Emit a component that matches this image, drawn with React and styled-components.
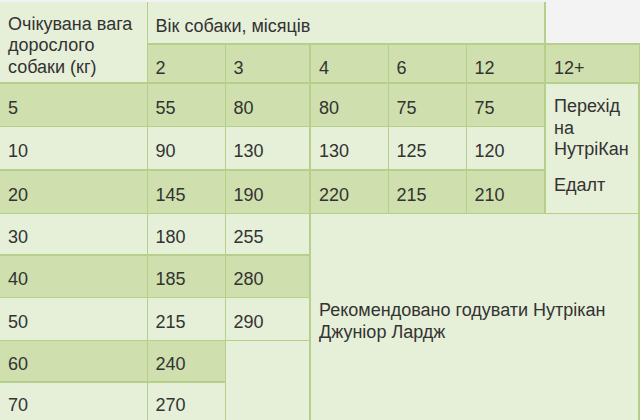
import React from 'react';
import styled, { createGlobalStyle } from 'styled-components';

const GlobalStyle = createGlobalStyle`
  body {
    margin: 0;
    background: #f3f3f3;
    font-family: "Liberation Sans", Arial, sans-serif;
  }
`;

const FeedTable = styled.table`
  border-collapse: collapse;
  table-layout: fixed;
  width: 639px;
  margin-top: 2px;
  font-size: 18px;
  line-height: 21.6px;
  color: #333;
`;

const Row = styled.tr`
  height: ${p => p.$height || 43}px;
  border-top: ${p => (p.$top === undefined ? 1 : p.$top)}px solid #b6cf8a;
`;

const Cell = styled.td`
  padding: ${p => p.$padTop ?? 8}px 8px 0;
  vertical-align: middle;
  text-align: left;
  font-weight: normal;
  border: 1px solid #b6cf8a;
  border-left-width: ${p => (p.$first ? 0 : p.$thickLeft ? 2 : 1)}px;
  border-top-width: ${p => (p.$noTop ? 0 : 1)}px;
  background: ${p => (p.$dark ? '#cfdfae' : '#e6efd8')};
`;

const EmptyCorner = styled.th`
  background: transparent;
  border: none;
  border-left: 2px solid #b6cf8a;
  border-bottom: 2px solid #b6cf8a;
`;

const NoteCell = styled(Cell)`
  padding: 0 8px 4px;
  border-right: 2px solid #b6cf8a;
`;

const NoteLine = styled.span`
  display: block;
  margin-top: ${p => (p.$gap ? 14 : 0)}px;
`;

const cols = [147, 78, 85, 78, 78, 79, 94];
const ages = ['2', '3', '4', '6', '12'];

const rows = [
  { kg: 5, vals: [55, 80, 80, 75, 75], dark: true, h: 43 },
  { kg: 10, vals: [90, 130, 130, 125, 120], h: 44 },
  { kg: 20, vals: [145, 190, 220, 215, 210], dark: true, thick: true, h: 43 },
  { kg: 30, vals: [180, 255], h: 42 },
  { kg: 40, vals: [185, 280], dark: true, thick: true, h: 42 },
  { kg: 50, vals: [215, 290], h: 43 },
  { kg: 60, vals: [240], dark: true, h: 42 },
  { kg: 70, vals: [270], thick: true, h: 43, pad: 5 },
];

export default function App() {
  return (
    <>
      <GlobalStyle />
      <FeedTable>
        <colgroup>
          {cols.map((w, i) => (
            <col key={i} style={{ width: w }} />
          ))}
        </colgroup>
        <thead>
          <Row $height={42} $top={0}>
            <Cell as="th" rowSpan={2} $first $noTop>Очікувана вага дорослого собаки (кг)</Cell>
            <Cell as="th" colSpan={5} $noTop>Вік собаки, місяців</Cell>
            <EmptyCorner />
          </Row>
          <Row $height={39} $top={2}>
            {ages.map((a, i) => (
              <Cell as="th" key={a} $dark $padTop={11} $thickLeft={i === 2}>{a}</Cell>
            ))}
            <Cell as="th" $dark $padTop={11} $thickLeft>12+</Cell>
          </Row>
        </thead>
        <tbody>
          {rows.map((r, ri) => (
            <Row key={r.kg} $height={r.h} $top={r.thick || ri === 0 ? 2 : 1}>
              <Cell $dark={r.dark} $padTop={r.pad} $first>{r.kg}</Cell>
              {r.vals.map((v, i) => (
                <Cell key={i} $dark={r.dark} $padTop={r.pad} $thickLeft={i === 2}>{v}</Cell>
              ))}
              {ri === 0 && (
                <NoteCell rowSpan={3} $thickLeft>
                  <NoteLine>Перехід на НутріКан</NoteLine>
                  <NoteLine $gap>Едалт</NoteLine>
                </NoteCell>
              )}
              {ri === 3 && (
                <NoteCell rowSpan={5} colSpan={4} $thickLeft style={{ paddingTop: 6, paddingBottom: 0 }}>
                  Рекомендовано годувати Нутрікан Джуніор Лардж
                </NoteCell>
              )}
              {ri === 6 && <Cell rowSpan={2} />}
            </Row>
          ))}
        </tbody>
      </FeedTable>
    </>
  );
}
